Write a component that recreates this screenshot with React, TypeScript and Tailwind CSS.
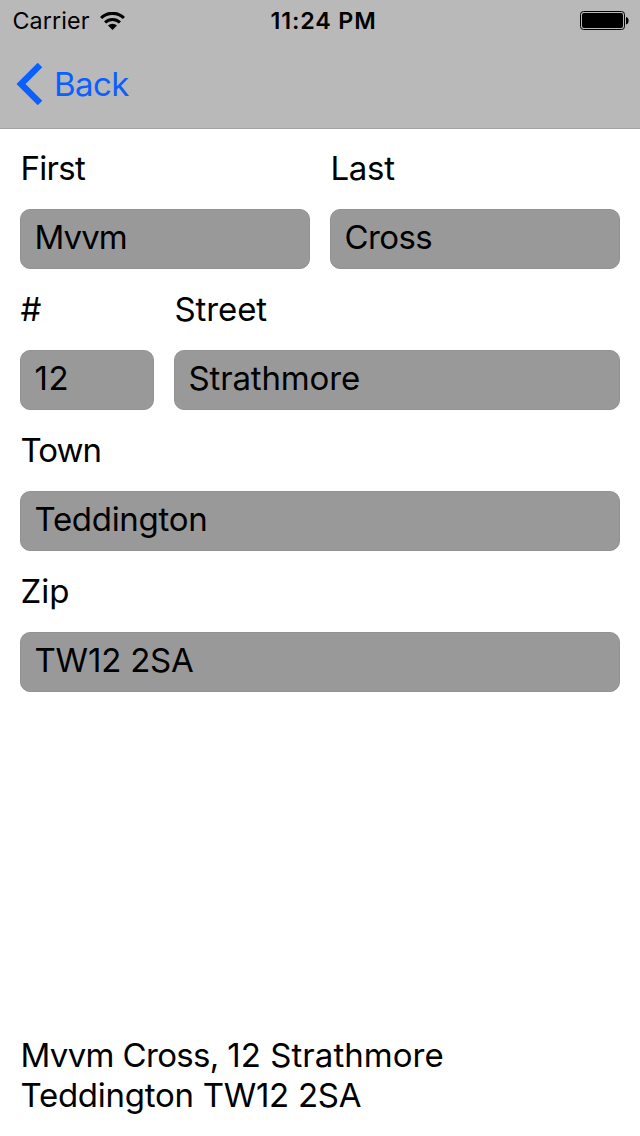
type FieldProps = {
  label: string;
  value: string;
  className?: string;
  labelClass?: string;
  valueClass?: string;
};

function Field({ label, value, className = "", labelClass = "", valueClass = "" }: FieldProps) {
  return (
    <label className={`block ${className}`}>
      <span className={`block h-[61px] pl-[0.5px] whitespace-nowrap text-[33px] leading-[40px] ${labelClass}`}>{label}</span>
      <span className="flex h-[60px] items-center rounded-[10px] border border-[#929292] bg-[#999999] px-[13.5px] pb-[4px] text-[33px] leading-[40px] whitespace-nowrap">
        <span className={valueClass}>{value}</span>
      </span>
    </label>
  );
}

export default function App() {
  return (
    <div className="flex h-[1136px] w-[640px] flex-col bg-white text-black font-['Inter','Liberation_Sans',sans-serif]">
      <header className="h-[129px] border-b border-[#a2a2a2] bg-[#b9b9b9]">
        <div className="grid h-10 grid-cols-3 items-center pl-3 pr-[11px] text-[23.3px] leading-[40px]">
          <div className="flex items-center gap-[10px]">
            <span className="pt-px pl-[0.5px] tracking-[0.1px]">Carrier</span>
            <svg width="25" height="18" viewBox="0 0 25 18" fill="none" stroke="black" strokeWidth="3.1">
              <path d="M1.1 6a16.3 16.3 0 0 1 22.8 0M5.1 10.5a10.6 10.6 0 0 1 14.8 0" />
              <path d="M12.5 18l-4.5-4.5a6.4 6.4 0 0 1 9 0z" fill="black" stroke="none" />
            </svg>
          </div>
          <span className="pl-[6px] pt-px text-center font-semibold tracking-[0.85px] whitespace-nowrap">11:24 PM</span>
          <svg className="justify-self-end" width="49" height="20" viewBox="0 0 49 20">
            <rect x=".5" y=".5" width="44" height="18" rx="3" fill="none" stroke="black" />
            <rect x="2" y="2" width="41" height="15" rx="2" />
            <path d="M46 6c3.5.5 3.5 7 0 7.5z" />
          </svg>
        </div>
        <button className="flex h-[88px] items-center pl-4 text-[33px] leading-[40px] text-[#0a60ff]">
          <svg width="27" height="42" viewBox="0 0 27 42" fill="none" stroke="currentColor" strokeWidth="6.4">
            <path d="M24 2L5 21l19 19" />
          </svg>
          <span className="ml-[11px] pb-px tracking-[-0.6px]">Back</span>
        </button>
      </header>
      <main className="flex flex-1 flex-col gap-5 px-5 pt-[19px]">
        <div className="grid grid-cols-2 gap-5">
          <Field label="First" value="Mvvm" labelClass="tracking-[-0.7px]" valueClass="tracking-[-0.9px]" />
          <Field label="Last" value="Cross" labelClass="tracking-[-0.3px]" valueClass="tracking-[-0.6px]" />
        </div>
        <div className="flex gap-5">
          <Field label="#" value="12" className="w-[134px]" valueClass="tracking-[0.6px]" />
          <Field label="Street" value="Strathmore" className="flex-1" labelClass="tracking-[-0.1px]" valueClass="tracking-[-0.15px]" />
        </div>
        <Field label="Town" value="Teddington" labelClass="tracking-[-1px]" valueClass="tracking-[-0.3px]" />
        <Field label="Zip" value="TW12 2SA" valueClass="tracking-[-0.2px]" />
      </main>
      <footer className="pl-[20.5px] pb-[21px] text-[33px] leading-[40px] tracking-[-0.27px]">
        <p>
          <span className="tracking-[-0.65px]">Mvvm Cross, </span>
          <span className="tracking-[0.04px]">12 Strathmore</span>
        </p>
        <p>Teddington TW12 2SA</p>
      </footer>
    </div>
  );
}
